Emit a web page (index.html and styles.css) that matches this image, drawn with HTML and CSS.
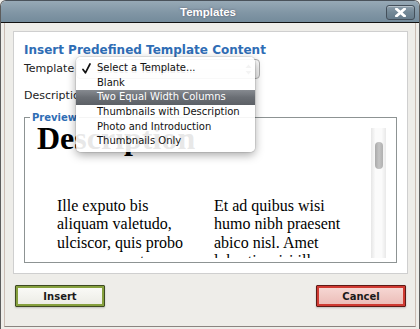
FILE: index.html
```html
<!DOCTYPE html>
<html>
<head>
<meta charset="utf-8">
<link rel="stylesheet" href="styles.css">
</head>
<body>
<div class="window">
  <div class="titlebar">
    <span class="spacer"></span>
    <div class="title">Templates</div>
    <button class="close" aria-label="Close">
      <svg width="11" height="9" viewBox="0 0 11 9"><path d="M1.5 1 L9.5 8 M9.5 1 L1.5 8" stroke="#fff" stroke-width="2.8" stroke-linecap="square"/></svg>
    </button>
  </div>
  <div class="frame">
    <div class="panel">
      <h2 class="heading">Insert Predefined Template Content</h2>
      <div class="row">
        <label class="label">Template</label>
        <div class="select">
          <span class="select-text">Select a Template...</span>
          <svg class="arrows" width="7" height="11" viewBox="0 0 7 11"><path d="M3.5 0.5 L6.5 4 L0.5 4 Z M3.5 10.5 L6.5 7 L0.5 7 Z" fill="#777"/></svg>
        </div>
      </div>
      <div class="row">
        <label class="label">Description</label>
      </div>
      <fieldset class="preview">
        <legend>Preview</legend>
        <div class="preview-body">
          <div class="doc">
            <h1>Description</h1>
            <div class="cols">
              <p>Ille exputo bis aliquam valetudo, ulciscor, quis probo commoveo ut lucidus abluo.</p>
              <p>Et ad quibus wisi humo nibh praesent abico nisl. Amet lobortis wisi illum dolus.</p>
            </div>
          </div>
          <div class="scrollbar"><div class="thumb"></div></div>
        </div>
      </fieldset>
      <ul class="menu">
        <li class="item"><svg class="check" width="9" height="11" viewBox="0 0 9 11"><path d="M1 6.5 L3.4 9.8 L8 1" fill="none" stroke="#111" stroke-width="1.7" stroke-linecap="round" stroke-linejoin="round"/></svg>Select a Template...</li>
        <li class="item">Blank</li>
        <li class="item active">Two Equal Width Columns</li>
        <li class="item">Thumbnails with Description</li>
        <li class="item">Photo and Introduction</li>
        <li class="item">Thumbnails Only</li>
      </ul>
    </div>
    <div class="actions">
      <button class="btn insert">Insert</button>
      <button class="btn cancel">Cancel</button>
    </div>
  </div>
</div>
</body>
</html>
```
FILE: styles.css
```css
* { box-sizing: border-box; }
html, body { margin: 0; padding: 0; }
body {
  width: 420px;
  height: 329px;
  overflow: hidden;
  background: #eeede9;
  font-family: "DejaVu Sans", Verdana, sans-serif;
}
.window {
  height: 329px;
  border-left: 1px solid #5c5c5c;
  border-right: 1px solid #5c5c5c;
  border-top: 1px solid #4a525a;
  border-radius: 6px 6px 0 0;
  background: #eeede9;
  overflow: hidden;
}
.titlebar {
  height: 22px;
  display: grid;
  grid-template-columns: 1fr auto 1fr;
  align-items: center;
  padding: 0 4px 0 0;
  background: linear-gradient(#97a9b6, #8196a5 55%, #748b9b);
  border-bottom: 1px solid #111;
}
.title {
  font-family: "Liberation Sans", Arial, sans-serif;
  font-weight: bold;
  font-size: 11.5px;
  color: #fff;
  text-shadow: 0 0 2px rgba(70, 60, 80, 0.7);
  padding-top: 1px;
}
.close {
  justify-self: end;
  width: 29px;
  height: 15px;
  margin-top: 1px;
  padding: 0;
  border: 1px solid #44505b;
  border-radius: 3px;
  background: linear-gradient(#8d9eab, #738896 50%, #667b8a);
  box-shadow: inset 0 1px 0 rgba(255,255,255,0.35);
  display: flex;
  align-items: center;
  justify-content: center;
}
.close svg { display: block; }
.frame {
  margin: 0 3px 0 3px;
  height: 304px;
  border-left: 1px solid #cbbdb4;
  border-right: 1px solid #cbbdb4;
  border-bottom: 1px solid #8a8480;
  padding-top: 8px;
}
.panel {
  position: relative;
  margin: 0 7px 0 8px;
  background: #fff;
  border: 1px solid #cfcfcf;
  padding: 11px 0 0 10px;
}
.heading {
  margin: 0;
  font-size: 12px;
  line-height: 14px;
  font-weight: bold;
  color: #2f6db5;
}
.row {
  display: flex;
  align-items: center;
  height: 22px;
  margin-top: 1px;
}
.row + .row { margin-top: 5px; }
.label {
  font-size: 11px;
  line-height: 22px;
  color: #222;
  width: 52px;
  flex: none;
}
.select {
  width: 184px;
  height: 20px;
  border: 1px solid #b0b0b0;
  border-radius: 4px;
  background: linear-gradient(#ffffff, #ececec);
  display: flex;
  align-items: center;
  justify-content: space-between;
  padding: 0 7px 0 20px;
  font-size: 10px;
  color: #222;
}
.preview {
  margin: 4px 10px 10px 0;
  padding: 0 10px 4px 1px;
  border: 1px solid #8d9393;
  min-width: 0;
}
.preview legend {
  margin-left: 4px;
  padding: 0 2px;
  font-size: 10px;
  line-height: 13px;
  font-weight: bold;
  color: #2f6db5;
}
.preview-body {
  display: flex;
  height: 134px;
}
.doc {
  flex: 1;
  overflow: hidden;
  padding-left: 11px;
  font-family: "Liberation Serif", "Times New Roman", serif;
  color: #000;
}
.doc h1 {
  margin: 0;
  font-size: 32px;
  line-height: 28px;
  font-weight: bold;
}
.cols {
  display: flex;
  gap: 22px;
  margin: 45px 0 0 20px;
}
.cols p {
  margin: 0;
  width: 135px;
  font-size: 16px;
  line-height: 18.4px;
}
.scrollbar {
  width: 15px;
  flex: none;
  margin: 4px 0 0;
  background: linear-gradient(90deg, #e6e6e6, #fbfbfb 30%, #fbfbfb 70%, #e9e9e9);
  display: flex;
  justify-content: center;
}
.thumb {
  width: 8px;
  height: 27px;
  margin-top: 14px;
  border-radius: 4px;
  background: linear-gradient(90deg, #a9a9a9, #c4c4c4 50%, #b0b0b0);
}
.menu {
  position: absolute;
  left: 62px;
  top: 25px;
  width: 179px;
  margin: 0;
  padding: 4px 0 3px;
  list-style: none;
  background: rgba(255, 255, 255, 0.91);
  border-radius: 5px;
  box-shadow: 0 0 0 1px rgba(0,0,0,0.08), 0 3px 10px rgba(0, 0, 0, 0.35);
}
.item {
  position: relative;
  height: 14.7px;
  line-height: 14.7px;
  padding-left: 21px;
  font-size: 10px;
  color: #111;
  white-space: nowrap;
}
.item.active {
  color: #fff;
  background: linear-gradient(#868a90, #6a6e74 50%, #5c6066);
}
.check {
  position: absolute;
  left: 6px;
  top: 2px;
  display: block;
}
.actions {
  display: flex;
  justify-content: space-between;
  padding: 11px 9px 0 10px;
}
.btn {
  width: 90px;
  height: 22px;
  padding: 0;
  font-family: "DejaVu Sans", Verdana, sans-serif;
  font-size: 10px;
  font-weight: bold;
  color: #1a1a1a;
  border-radius: 1px;
}
.insert {
  border: 1px solid #3e4a22;
  background: linear-gradient(#fbfbf8, #ebebe4);
  box-shadow: inset 0 0 0 2px #86a03e, 0 1px 2px rgba(0,0,0,0.2);
}
.cancel {
  border: 1px solid #5e1a16;
  background: linear-gradient(#f7dad6, #ebbab5);
  box-shadow: inset 0 0 0 2px #cf3a32, 0 1px 2px rgba(0,0,0,0.2);
}
```
